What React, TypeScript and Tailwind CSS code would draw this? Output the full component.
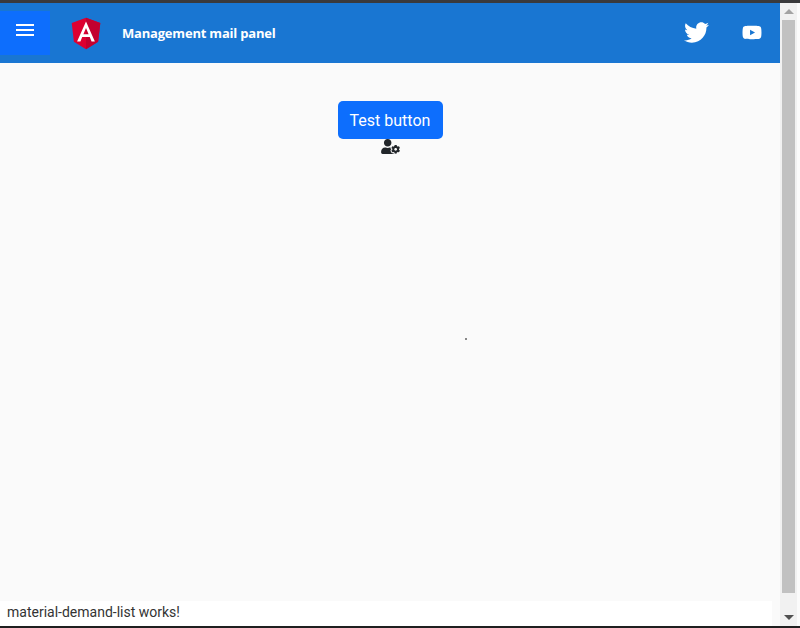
import { FaTwitter, FaYoutube, FaUserCog } from "react-icons/fa";

function AngularLogo() {
  return (
    <svg width="34" height="35" viewBox="0 0 250 250" className="block">
      <polygon fill="#DD0031" points="125,10 125,10 125,10 20,47 36,186 125,240 125,240 125,240 214,186 230,47" />
      <polygon fill="#C3002F" points="125,10 125,35 125,35 125,149 125,149 125,240 125,240 214,186 230,47" />
      <path fill="#FFFFFF" d="M125,37.1L59.4,184.2h24.5l13.2-32.9h55.5l13.2,32.9h24.4L125,37.1z M144.2,130.9h-38.4L125,84.7L144.2,130.9z" />
    </svg>
  );
}

export default function App() {
  return (
    <div className="h-[628px] w-[800px] flex flex-col overflow-hidden bg-[#fafafa] font-['Open_Sans','Noto_Sans',sans-serif]">
      {/* window edge */}
      <div className="h-[3px] shrink-0 bg-[#3a3a3c]" />

      <div className="flex-1 flex min-h-0">
        <div className="relative w-[780px] flex flex-col">
          {/* Header */}
          <header className="h-[60px] shrink-0 bg-[#1976d2] flex items-center text-white">
            <button className="w-[50px] h-[44px] mt-[-1px] bg-[#0d6efd] flex items-center justify-center">
              <span className="flex flex-col gap-[3px] mt-[-6px]">
                <span className="block w-[18px] h-[2px] bg-white" />
                <span className="block w-[18px] h-[2px] bg-white" />
                <span className="block w-[18px] h-[2px] bg-white" />
              </span>
            </button>
            <div className="ml-[19px]">
              <AngularLogo />
            </div>
            <h1 className="ml-[19px] text-[13px] font-bold leading-none tracking-[-0.2px]">Management mail panel</h1>
            <div className="ml-auto flex items-center mr-[18px] gap-[33px]">
              <FaTwitter className="w-[25px] h-[25px] mt-[-1px]" />
              <FaYoutube className="w-[20px] h-[21px] mt-[-1px]" />
            </div>
          </header>

          {/* Content */}
          <main className="flex-1 flex flex-col items-center pt-[38px]">
            <button className="w-[105px] h-[38px] pt-[2px] bg-[#0d6efd] rounded-[5px] text-white text-[16px] leading-none font-['Roboto',sans-serif]">
              Test button
            </button>
            <FaUserCog className="w-[19px] h-[15px] text-[#212529]" />
          </main>
          <span className="absolute left-[465px] top-[335px] w-[2px] h-[2px] bg-[#888]" />

          {/* Footer text */}
          <div className="h-[25px] w-[772px] shrink-0 bg-white pl-[7px] text-[14px] leading-[23px] text-[#333] font-['Roboto',sans-serif]">
            material-demand-list works!
          </div>
        </div>

        {/* Browser scrollbar */}
        <div className="w-[17px] shrink-0 bg-[#f1f1f1] flex flex-col items-center">
          <div className="h-[17px] shrink-0 flex items-center justify-center">
            <span className="border-x-[5px] border-x-transparent border-b-[5px] border-b-[#a3a3a3]" />
          </div>
          <div className="w-[13px] flex-1 bg-[#c1c1c1]" />
          <div className="h-[33px] shrink-0 flex items-end justify-center pb-[6px]">
            <span className="border-x-[5px] border-x-transparent border-t-[5px] border-t-[#505050]" />
          </div>
        </div>
        <div className="w-[3px] shrink-0 bg-[#fbfbfb]" />
      </div>

      <div className="h-[2px] shrink-0 bg-[#1f1f1f]" />
    </div>
  );
}
